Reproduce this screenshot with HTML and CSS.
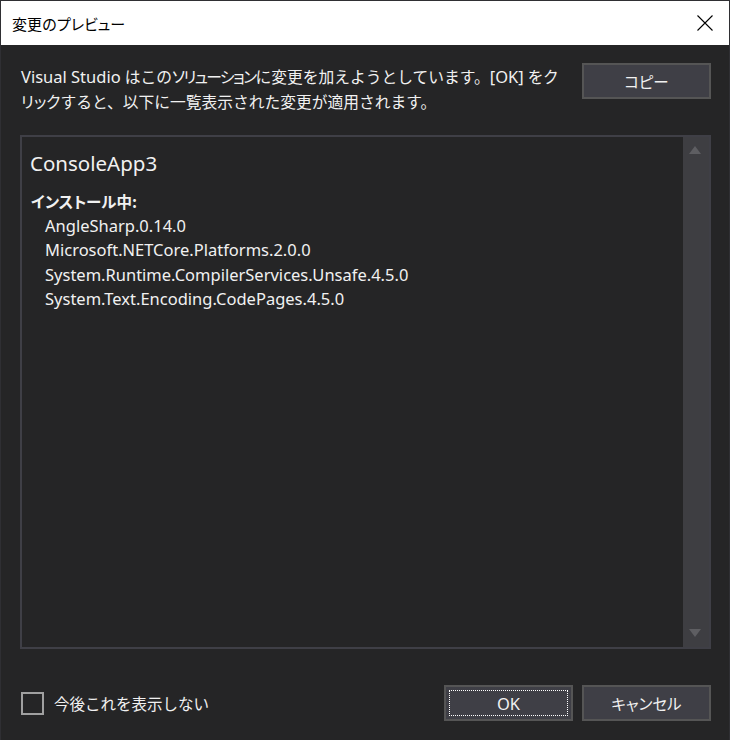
FILE: index.html
```html
<!DOCTYPE html>
<html lang="ja">
<head>
<meta charset="utf-8">
<title>変更のプレビュー</title>
<link rel="stylesheet" href="styles.css">
</head>
<body>
<div class="window">
  <div class="titlebar">
    <span class="title">変更の<span class="k">プレビュー</span></span>
    <svg class="close" width="16" height="16" viewBox="0 0 16 16"><path d="M0.5 0.5 L15.5 15.5 M15.5 0.5 L0.5 15.5" stroke="#000" stroke-width="1.1" fill="none"/></svg>
  </div>
  <div class="content">
    <div class="top-row">
      <p class="desc"><span class="lat">Visual Studio</span> はこの<span class="k kn">ソリューション</span>に変更を加えようとしています。<span class="lat">[OK]</span> を<span class="k">ク</span><br><span class="k">リック</span>すると、以下に一覧表示された変更が適用されます。</p>
      <button class="btn"><span class="k">コピー</span></button>
    </div>
    <div class="listbox">
      <div class="list-content">
        <div class="project">ConsoleApp3</div>
        <div class="section"><span class="k">インストール</span>中:</div>
        <ul class="items">
          <li>AngleSharp.0.14.0</li>
          <li>Microsoft.NETCore.Platforms.2.0.0</li>
          <li>System.Runtime.CompilerServices.Unsafe.4.5.0</li>
          <li>System.Text.Encoding.CodePages.4.5.0</li>
        </ul>
      </div>
      <div class="scrollbar">
        <span class="arrow up"></span>
        <span class="arrow down"></span>
      </div>
    </div>
    <div class="bottom-row">
      <label class="check"><span class="box"></span><span class="check-label">今後これを表示しない</span></label>
      <div class="buttons">
        <button class="btn default"><span class="focus lat">OK</span></button>
        <button class="btn"><span class="k">キャンセル</span></button>
      </div>
    </div>
  </div>
</div>
</body>
</html>
```

FILE: styles.css
```css
* { box-sizing: border-box; }
html, body { margin: 0; padding: 0; background: #252526; }
body {
  font-family: "Noto Sans", "Noto Sans CJK JP", sans-serif;
  font-size: 15.5px;
  color: #f1f1f1;
}
.k { font-feature-settings: "palt"; }
.kn { letter-spacing: -1.6px; }
.lat { font-size: 16.5px; }
.window {
  width: 730px;
  height: 740px;
  border: 1px solid #2f2f33;
  border-bottom: none;
  background: #252526;
  display: flex;
  flex-direction: column;
  overflow: hidden;
}
.titlebar {
  height: 44px;
  flex: none;
  background: #ffffff;
  display: flex;
  align-items: center;
  justify-content: space-between;
  padding: 0 16px 0 11px;
}
.title {
  font-family: "Noto Sans CJK JP", sans-serif;
  font-size: 15px;
  color: #000;
}
.close { display: block; }
.content {
  flex: 1;
  display: flex;
  flex-direction: column;
  padding: 18px 18px 0 19px;
}
.top-row {
  display: flex;
  justify-content: space-between;
  align-items: flex-start;
  height: 72px;
}
.desc {
  margin: 0;
  padding: 1px 0 0 1px;
  line-height: 25px;
  font-size: 15.75px;
  white-space: nowrap;
}
.btn {
  width: 129px;
  height: 36px;
  background: #3f3f46;
  border: 2px solid #555555;
  color: #f1f1f1;
  font-family: "Noto Sans", "Noto Sans CJK JP", sans-serif;
  font-size: 15.5px;
  padding: 0;
  display: flex;
  align-items: center;
  justify-content: center;
}
.btn.default { padding: 3px; }
.focus {
  flex: 1;
  align-self: stretch;
  border: 1px dotted #ffffff;
  display: flex;
  align-items: center;
  justify-content: center;
}
.listbox {
  height: 514px;
  border: 2px solid #3f3f46;
  display: flex;
  background: #252526;
}
.list-content {
  flex: 1;
  padding: 12px 0 0 8px;
}
.project {
  font-size: 20.5px;
  line-height: 28px;
}
.section {
  margin-top: 12px;
  padding-left: 1px;
  font-weight: bold;
  line-height: 24.5px;
  font-family: "Noto Sans CJK JP", sans-serif;
  font-size: 15.5px;
}
.items {
  list-style: none;
  margin: 0;
  padding: 0 0 0 15px;
  font-size: 16.5px;
}
.items li {
  line-height: 24.5px;
}
.scrollbar {
  width: 26px;
  background: #3e3e42;
  display: flex;
  flex-direction: column;
  justify-content: space-between;
  align-items: center;
  padding: 9px 0 10px;
}
.arrow {
  width: 0;
  height: 0;
  border-left: 6.5px solid transparent;
  border-right: 6.5px solid transparent;
  margin-left: -2px;
}
.arrow.up { border-bottom: 8px solid #5e5e62; }
.arrow.down { border-top: 8px solid #5e5e62; }
.bottom-row {
  margin-top: 36px;
  height: 36px;
  display: flex;
  align-items: center;
  justify-content: space-between;
}
.check {
  display: flex;
  align-items: center;
  padding-left: 1px;
}
.box {
  width: 23px;
  height: 23px;
  border: 2px solid #a0a0a0;
}
.check-label {
  margin-left: 10px;
  font-family: "Noto Sans CJK JP", sans-serif;
}
.buttons {
  display: flex;
  gap: 9px;
}
```
